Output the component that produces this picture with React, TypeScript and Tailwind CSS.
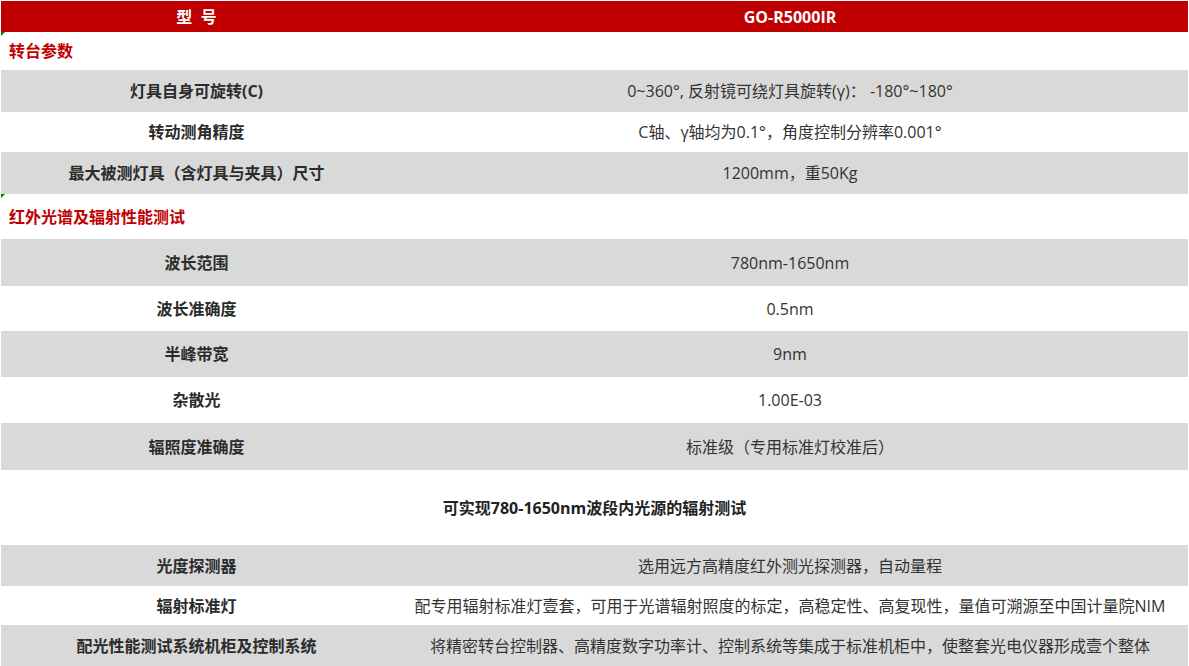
import React from "react";

type Row =
  | { kind: "section"; title: string; h: string }
  | { kind: "row"; label: string; value: string; gray: boolean; h: string }
  | { kind: "note"; text: string; h: string };

const rows: Row[] = [
  { kind: "section", title: "转台参数", h: "h-[38px]" },
  { kind: "row", label: "灯具自身可旋转(C)", value: "0~360°, 反射镜可绕灯具旋转(γ)：  -180°~180°", gray: true, h: "h-[42px]" },
  { kind: "row", label: "转动测角精度", value: "C轴、γ轴均为0.1°，角度控制分辨率0.001°", gray: false, h: "h-[40px]" },
  { kind: "row", label: "最大被测灯具（含灯具与夹具）尺寸", value: "1200mm，重50Kg", gray: true, h: "h-[42px]" },
  { kind: "section", title: "红外光谱及辐射性能测试", h: "h-[45px]" },
  { kind: "row", label: "波长范围", value: "780nm-1650nm", gray: true, h: "h-[47px]" },
  { kind: "row", label: "波长准确度", value: "0.5nm", gray: false, h: "h-[45px]" },
  { kind: "row", label: "半峰带宽", value: "9nm", gray: true, h: "h-[46px]" },
  { kind: "row", label: "杂散光", value: "1.00E-03", gray: false, h: "h-[46px]" },
  { kind: "row", label: "辐照度准确度", value: "标准级（专用标准灯校准后）", gray: true, h: "h-[47px]" },
  { kind: "note", text: "可实现780-1650nm波段内光源的辐射测试", h: "h-[75px]" },
  { kind: "row", label: "光度探测器", value: "选用远方高精度红外测光探测器，自动量程", gray: true, h: "h-[41px]" },
  { kind: "row", label: "辐射标准灯", value: "配专用辐射标准灯壹套，可用于光谱辐射照度的标定，高稳定性、高复现性，量值可溯源至中国计量院NIM", gray: false, h: "h-[39px]" },
  { kind: "row", label: "配光性能测试系统机柜及控制系统", value: "将精密转台控制器、高精度数字功率计、控制系统等集成于标准机柜中，使整套光电仪器形成壹个整体", gray: true, h: "h-[42px]" },
];

function Corner() {
  return (
    <span className="absolute left-0 top-0 w-0 h-0 border-t-[4px] border-r-[4px] border-t-[#008000] border-r-transparent" />
  );
}

export default function App() {
  return (
    <div
      className="w-[1189px] h-[666px] overflow-hidden bg-white pt-px px-px text-[16px] text-[#333]"
      style={{ fontFamily: '"Open Sans", "Noto Sans CJK SC", sans-serif' }}
    >
      <div className="flex h-[31px] bg-[#c00000] text-white font-bold items-center">
        <div className="w-[391px] text-center">型&nbsp;&nbsp;号</div>
        <div className="flex-1 text-center">GO-R5000IR</div>
      </div>
      {rows.map((r, i) => {
        if (r.kind === "section") {
          return (
            <div key={i} className={`relative flex items-center pl-2 ${r.h} text-[#c00000] font-bold`}>
              <Corner />
              {r.title}
            </div>
          );
        }
        if (r.kind === "note") {
          return (
            <div key={i} className={`flex items-center justify-center ${r.h} font-bold text-[#222]`}>
              {r.text}
            </div>
          );
        }
        return (
          <div key={i} className={`flex items-center ${r.h} ${r.gray ? "bg-[#d9d9d9]" : "bg-white"}`}>
            <div className="w-[391px] text-center font-bold text-[#2b2b2b]">{r.label}</div>
            <div className="flex-1 text-center whitespace-nowrap">{r.value}</div>
          </div>
        );
      })}
    </div>
  );
}
